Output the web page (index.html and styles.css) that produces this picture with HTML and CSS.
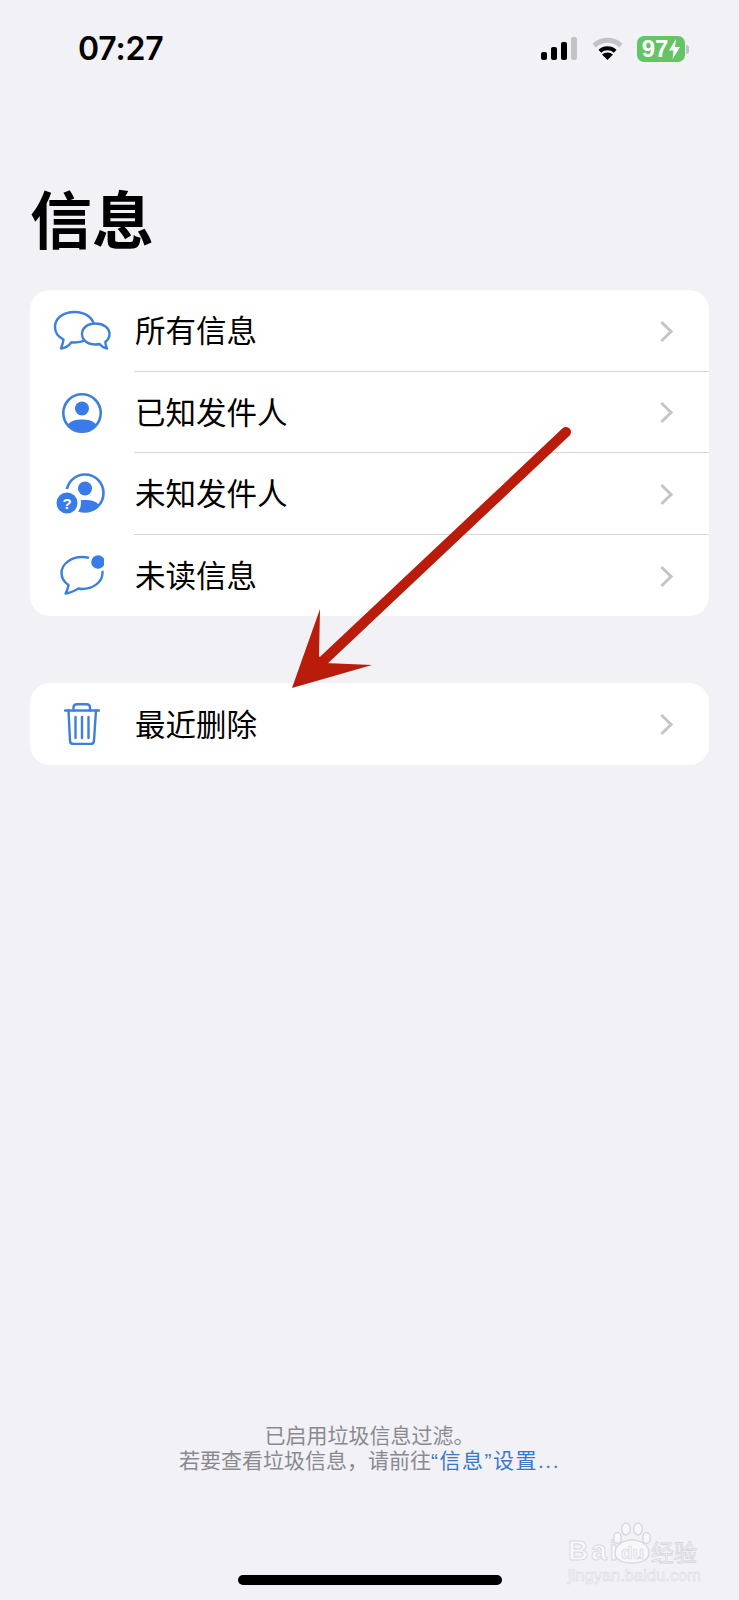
FILE: index.html
```html
<!DOCTYPE html>
<html lang="zh-CN">
<head>
    <meta charset="UTF-8">
    <title>信息</title>
    <link rel="stylesheet" href="styles.css">
</head>
<body>
<div id="page">
    <div class="status">
        <span class="time">07:27</span>
        <div class="status-icons">
            <div class="signal">
                <i class="bar1"></i><i class="bar2"></i><i class="bar3"></i><i class="bar4"></i>
            </div>
            <svg class="wifi" width="31" height="23" viewBox="0 0 31 23">
                <path d="M2.2 8.6A19.5 19.5 0 0 1 28.8 8.6" fill="none" stroke="#c3c3c6" stroke-width="5"/>
                <path d="M7.8 14.2A11.5 11.5 0 0 1 23.2 14.2" fill="none" stroke="#000" stroke-width="4"/>
                <path d="M15.5 23L10 17.6A8 8 0 0 1 21 17.6Z" fill="#000"/>
            </svg>
            <div class="battery"><span>97</span><svg width="11" height="20" viewBox="0 0 11 20"><path d="M7 0L0 11.5H4.5L3.5 20L11 8H6Z" fill="#fff"/></svg></div>
            <i class="battery-nub"></i>
        </div>
    </div>

    <h1 class="title">信息</h1>

    <div class="card">
        <div class="row">
            <div class="icon">
                <svg width="60" height="42" viewBox="0 0 60 42" fill="none" stroke="#3f7fdc" stroke-width="2.4" stroke-linejoin="round">
                    <path d="M22.5 2C11 2 3 8.500 3 17C3 22.500 6.500 27 11.500 29.500C11 33 10 36 9 38.500C13.500 38 17 35.500 19.500 32.200C21 32.400 21.800 32.500 22.500 32.500C34 32.500 42 25.500 42 17C42 8.500 34 2 22.500 2Z" fill="#fff"/>
                    <path d="M43.500 13.500C35.500 13.500 30 18 30 24C30 30 35.500 34.500 43.500 34.500C45 34.500 46.500 34.300 47.500 34C49.500 36.500 52 38 55 38.500C54 36.500 53.500 34.500 53.300 32C56 30 57.500 27 57.500 24C57.500 18 51.500 13.500 43.500 13.500Z" fill="#fff"/>
                </svg>
            </div>
            <div class="row-body"><span class="label">所有信息</span><span class="chevron"></span></div>
        </div>
        <div class="row">
            <div class="icon">
                <svg width="40" height="41" viewBox="0 -1 40 41">
                    <circle cx="20" cy="20" r="18.700" fill="none" stroke="#3f7fdc" stroke-width="2.600"/>
                    <circle cx="20" cy="15.500" r="7" fill="#3a7bea"/>
                    <path d="M5.500 32C9 27.500 14 26.500 20 26.500C26 26.500 31 27.500 34.500 32A20 20 0 0 1 5.500 32Z" fill="#3a7bea"/>
                </svg>
            </div>
            <div class="row-body"><span class="label">已知发件人</span><span class="chevron"></span></div>
        </div>
        <div class="row">
            <div class="icon">
                <svg width="52" height="42" viewBox="0 0 52 42">
                    <circle cx="29" cy="20" r="18.500" fill="none" stroke="#3f7fdc" stroke-width="2.600"/>
                    <circle cx="29" cy="15.500" r="7" fill="#3a7bea"/>
                    <path d="M15 32C18 28 23 27 29 27C35 27 40 28 43 32A19 19 0 0 1 15 32Z" fill="#3a7bea"/>
                    <circle cx="11" cy="30" r="14" fill="#fff"/>
                    <circle cx="11" cy="30" r="10.500" fill="#3a7bea"/>
                    <text class="question" x="11" y="35.500" text-anchor="middle">?</text>
                </svg>
            </div>
            <div class="row-body"><span class="label">未知发件人</span><span class="chevron"></span></div>
        </div>
        <div class="row">
            <div class="icon">
                <svg width="44" height="42" viewBox="0 0 44 42">
                    <path d="M22 3C11 3 1.500 10 1.500 19C1.500 24 4 28 8.500 31C8 34.500 7 37 5.500 39.500C10.500 39 15 36.500 18.500 34.500C20 34.800 21 35 22 35C33 35 42.500 28 42.500 19C42.500 10 33 3 22 3Z" fill="none" stroke="#3f7fdc" stroke-width="2.400" stroke-linejoin="round"/>
                    <circle cx="38" cy="8" r="10" fill="#fff"/>
                    <circle cx="38" cy="8" r="6.800" fill="#3a7bea"/>
                </svg>
            </div>
            <div class="row-body"><span class="label">未读信息</span><span class="chevron"></span></div>
        </div>
    </div>

    <div class="card card-single">
        <div class="row">
            <div class="icon">
                <svg width="36" height="42" viewBox="0 0 36 42" fill="none" stroke="#3f7fdc" stroke-width="2.400" stroke-linecap="round" stroke-linejoin="round">
                    <path d="M1 7.500H35"/>
                    <path d="M9.500 7.500V4.500C9.500 2.500 11 1.200 13 1.200H22.500C24.500 1.200 26 2.500 26 4.500V7.500"/>
                    <path d="M4.500 7.500L6 37.500C6 39.800 7.500 41 9.500 41H26.500C28.500 41 30 39.800 30 37.500L32 7.500"/>
                    <path d="M11.500 14V35M18 14V35M24.500 14V35"/>
                </svg>
            </div>
            <div class="row-body"><span class="label">最近删除</span><span class="chevron"></span></div>
        </div>
    </div>

    <div class="note">
        <p>已启用垃圾信息过滤。</p>
        <p>若要查看垃圾信息，请前往<span class="note-link">“信息”设置...</span></p>
    </div>
    <div class="home-bar"></div>

    <svg class="arrow" width="739" height="700" viewBox="0 0 739 700">
        <path d="M566 432L324 660" fill="none" stroke="#b91c0a" stroke-width="10" stroke-linecap="round"/>
        <path d="M320 609L292 688L372 665L325 663L319 656Z" fill="#b91c0a"/>
    </svg>

    <div class="watermark">
        <div class="wm-top">
            <span class="wm-bai">Bai</span>
            <div class="wm-paw">
                <svg width="38" height="42" viewBox="0 0 38 42" fill="#f8f8fb" stroke="#dadade" stroke-width="1.500">
                    <ellipse cx="4.500" cy="16" rx="3.800" ry="5.500"/>
                    <ellipse cx="13" cy="7" rx="4.300" ry="6"/>
                    <ellipse cx="25" cy="7" rx="4.300" ry="6"/>
                    <ellipse cx="33.500" cy="16" rx="3.800" ry="5.500"/>
                    <path d="M2 31C2 23 10 18 19 18C28 18 36 23 36 31C36 38 28 41 19 41C10 41 2 38 2 31Z"/>
                </svg>
                <span class="wm-du">du</span>
            </div>
            <span class="wm-cn">经验</span>
        </div>
        <div class="wm-url">jingyan.baidu.com</div>
    </div>
</div>
</body>
</html>
```

FILE: styles.css
```css
* {
    box-sizing: border-box;
}

body {
    margin: 0;
    padding: 0;
    background: #f1f1f6;
}

#page {
    position: relative;
    width: 739px;
    height: 1600px;
    display: flex;
    flex-direction: column;
    overflow: hidden;
    font-family: "Noto Sans CJK SC", "Liberation Sans", sans-serif;
    color: #000;
}

.status {
    height: 62px;
    padding: 36px 50px 0 78px;
    display: flex;
    justify-content: space-between;
}

.time {
    font-family: Inter, "Liberation Sans", sans-serif;
    font-size: 32px;
    font-weight: 600;
    letter-spacing: -0.2px;
    line-height: 26px;
}

.status-icons {
    display: flex;
    align-items: flex-start;
}

.signal {
    display: flex;
    align-items: flex-end;
    height: 23px;
    gap: 4px;
    margin: 1px 15px 0 0;
}

.signal i {
    display: block;
    width: 6px;
    background: #000;
    border-radius: 2px;
}

.signal .bar1 { height: 8px; }
.signal .bar2 { height: 13px; }
.signal .bar3 { height: 18px; }
.signal .bar4 { height: 23px; background: #c3c3c6; }

.wifi {
    margin: 1px 14px 0 0;
}

.battery {
    width: 48px;
    height: 26px;
    background: #65c466;
    border-radius: 7px;
    color: #fff;
    font-family: "Liberation Sans", sans-serif;
    font-size: 24px;
    font-weight: bold;
    line-height: 26px;
    display: flex;
    align-items: center;
    justify-content: center;
    gap: 1px;
}

.battery-nub {
    display: block;
    width: 3px;
    height: 9px;
    margin: 9px 0 0 1px;
    background: #c3c3c6;
    border-radius: 0 3px 3px 0;
}

.title {
    margin: 115px 0 0 30px;
    height: 113px;
    font-size: 62px;
    font-weight: 700;
    line-height: 80px;
}

.card {
    margin: 0 30px;
    background: #fff;
    border-radius: 20px;
}

.card-single {
    margin-top: 67px;
}

.row {
    display: flex;
    height: 81.5px;
}

.icon {
    width: 104px;
    flex: none;
    display: flex;
    align-items: center;
    justify-content: center;
}

.row-body {
    flex: 1;
    display: flex;
    align-items: center;
    justify-content: space-between;
    padding: 0 39px 0 1px;
    border-bottom: 1px solid #d8d8da;
}

.row:last-child .row-body {
    border-bottom: 0;
}

.label {
    font-size: 30.5px;
    line-height: 40px;
    margin-bottom: 2px;
}

.chevron {
    display: block;
    width: 15px;
    height: 15px;
    margin-top: 2px;
    border-top: 3.5px solid #c5c5c8;
    border-right: 3.5px solid #c5c5c8;
    transform: rotate(45deg);
}

.question {
    font-family: "Liberation Sans", sans-serif;
    font-size: 15px;
    font-weight: bold;
    fill: #fff;
}

.note {
    margin-top: auto;
    text-align: center;
    font-size: 21px;
    line-height: 25px;
    color: #8a8a8e;
}

.note p {
    margin: 0;
}

.note-link {
    font-family: "Liberation Sans", "Noto Sans CJK SC", sans-serif;
    letter-spacing: 1.5px;
    color: #3a78c4;
}

.home-bar {
    width: 264px;
    height: 10px;
    margin: 102px 0 15px 238px;
    background: #000;
    border-radius: 5px;
}

.arrow {
    position: absolute;
    left: 0;
    top: 0;
}

.watermark {
    position: absolute;
    left: 568px;
    top: 1520px;
    width: 136px;
    color: #f8f8fb;
    font-family: "Liberation Sans", sans-serif;
}

.wm-top {
    display: flex;
    align-items: flex-end;
    height: 44px;
}

.wm-bai {
    width: 45px;
    font-size: 28px;
    font-weight: bold;
    letter-spacing: 3px;
    line-height: 28px;
    margin-bottom: -1px;
    -webkit-text-stroke: 1px #dadade;
}

.wm-paw {
    position: relative;
    width: 38px;
    height: 42px;
}

.wm-paw svg {
    display: block;
}

.wm-du {
    position: absolute;
    left: 8px;
    top: 21px;
    font-size: 19px;
    font-weight: bold;
    line-height: 20px;
    -webkit-text-stroke: 0.7px #d4d4d8;
}

.wm-cn {
    font-family: "Noto Sans CJK SC", sans-serif;
    font-size: 23px;
    line-height: 26px;
    -webkit-text-stroke: 0.8px #d6d6da;
}

.wm-url {
    margin-top: 3px;
    font-size: 16.5px;
    line-height: 17px;
    white-space: nowrap;
    -webkit-text-stroke: 0.6px #dadade;
}
```
